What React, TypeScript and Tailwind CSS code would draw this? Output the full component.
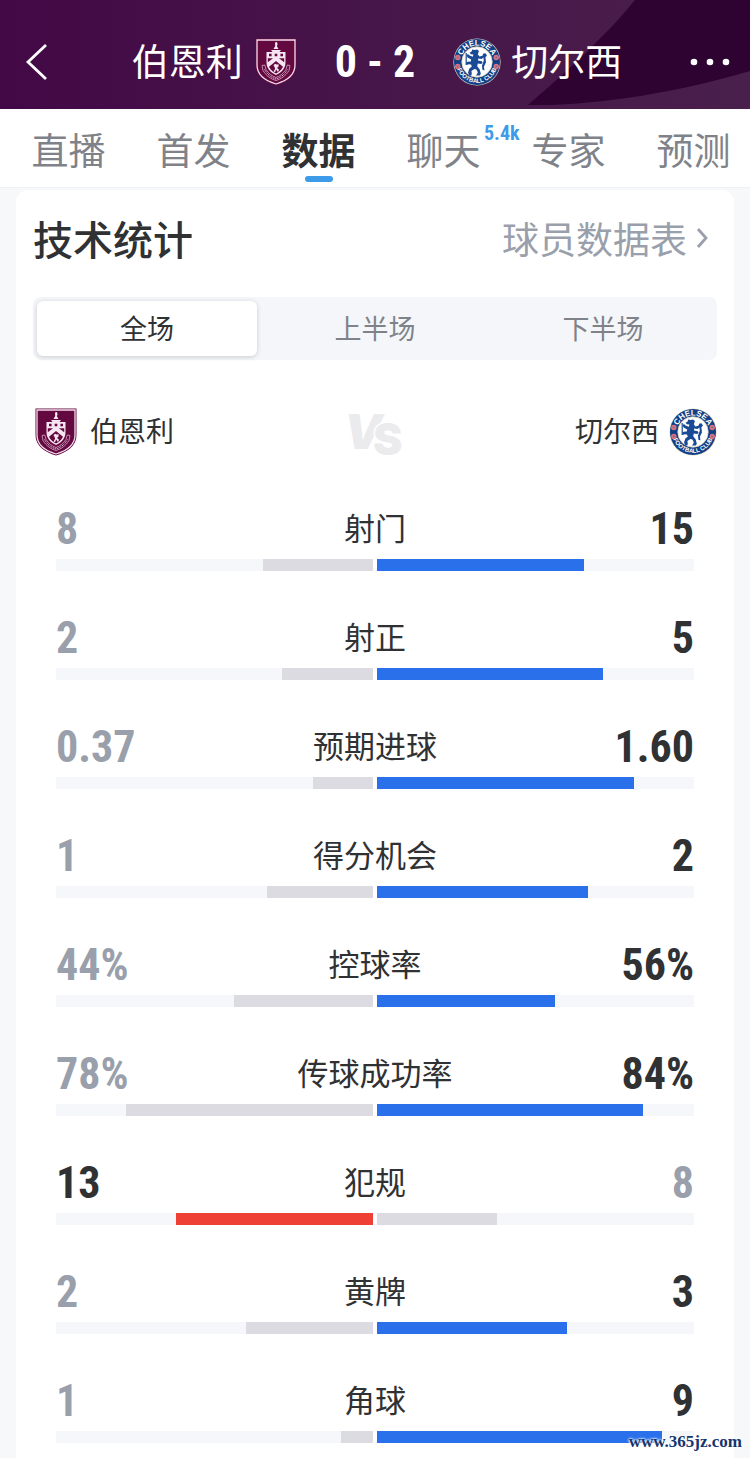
import { useId, useState } from 'react';
import { clsx } from 'clsx';

type Stat = {
  label: string;
  home: string;
  away: string;
  homePct: number;
  awayPct: number;
  lead: 'home' | 'away';
};

const stats: Stat[] = [
  { label: '射门', home: '8', away: '15', homePct: 34.8, awayPct: 65.2, lead: 'away' },
  { label: '射正', home: '2', away: '5', homePct: 28.6, awayPct: 71.4, lead: 'away' },
  { label: '预期进球', home: '0.37', away: '1.60', homePct: 18.8, awayPct: 81.2, lead: 'away' },
  { label: '得分机会', home: '1', away: '2', homePct: 33.3, awayPct: 66.7, lead: 'away' },
  { label: '控球率', home: '44%', away: '56%', homePct: 44, awayPct: 56, lead: 'away' },
  { label: '传球成功率', home: '78%', away: '84%', homePct: 78, awayPct: 84, lead: 'away' },
  { label: '犯规', home: '13', away: '8', homePct: 62, awayPct: 38, lead: 'home' },
  { label: '黄牌', home: '2', away: '3', homePct: 40, awayPct: 60, lead: 'away' },
  { label: '角球', home: '1', away: '9', homePct: 10, awayPct: 90, lead: 'away' },
];

const tabs = [
  { label: '直播' },
  { label: '首发' },
  { label: '数据' },
  { label: '聊天', badge: '5.4k' },
  { label: '专家' },
  { label: '预测' },
];

const periods = ['全场', '上半场', '下半场'];

const numeric = "font-['Roboto_Condensed','Liberation_Sans',sans-serif] font-bold";

function BurnleyCrest({ className }: { className?: string }) {
  return (
    <svg viewBox="0 0 42 48" className={className} aria-hidden="true">
      <path d="M0.5 0.5H41.5V27C41.5 38 32 44.5 21 47.5C10 44.5 0.5 38 0.5 27Z" fill="#63093f" />
      <path d="M2 2H40V27C40 37 31 43 21 46C11 43 2 37 2 27Z" fill="none" stroke="#f3dcec" strokeWidth="1.3" />
      <path d="M20 4.5L22 4L22.6 6.5L21.8 8L23.5 11H18.5L20.2 8Z" fill="#f6e6f1" />
      <path d="M16 12H26L24.5 14H17.5Z" fill="#f6e6f1" />
      <path d="M11.5 14H30.5V24C30.5 31 26 34.5 21 37C16 34.5 11.5 31 11.5 24Z" fill="#f6e6f1" />
      <path d="M14 15.7h2.6v2.6H14zM19.7 15.7h2.6v2.6h-2.6zM25.4 15.7H28v2.6h-2.6z" fill="#63093f" />
      <path d="M12.8 20.2H18L12.8 24.3ZM24 20.2H29.2V24.3Z" fill="#63093f" />
      <path d="M21 23L28 28.8C26.5 32 24 34 21 35.6C18 34 15.5 32 14 28.8Z" fill="#63093f" />
      <path d="M18.5 27l2-1.2 1.5 1 1.5-1v3l-1.5 1 2 2-1 2.2-1.8-2.4-1.2 2.6-1.4-.8 1.6-3z" fill="#f6e6f1" />
      <path d="M7 27.5L9.8 27L11 31.5C14 36 17 38 21 39.5C25 38 28 36 31 31.5L32.2 27L35 27.5L34 32.5C30.5 38 26 41 21 42.5C16 41 11.5 38 8 32.5Z" fill="none" stroke="#d9a9c8" strokeWidth="0.8" />
      <path d="M9.5 31.5C12.5 36.8 16.5 39.5 21 41C25.5 39.5 29.5 36.8 32.5 31.5" fill="none" stroke="#ecd0e2" strokeWidth="1" strokeDasharray="1.2 0.8" />
    </svg>
  );
}

function ChelseaCrest({ className }: { className?: string }) {
  const id = useId();
  return (
    <svg viewBox="0 0 48 48" className={className} aria-hidden="true">
      <defs>
        <path id={`${id}top`} d="M7.6 24A16.4 16.4 0 0 1 40.4 24" />
        <path id={`${id}bottom`} d="M3.2 24A20.8 20.8 0 0 0 44.8 24" />
      </defs>
      <circle cx="24" cy="24" r="23.6" fill="#ddd7c2" />
      <circle cx="24" cy="24" r="23" fill="#123f86" />
      <circle cx="24" cy="24" r="15.2" fill="#fff" stroke="#d9d2b4" strokeWidth="0.8" />
      <text fill="#fff" textAnchor="middle" className="font-['Liberation_Sans',sans-serif] text-[8px] font-bold">
        <textPath href={`#${id}top`} startOffset="50%">CHELSEA</textPath>
      </text>
      <text fill="#fff" textAnchor="middle" className="font-['Liberation_Sans',sans-serif] text-[6px] font-bold">
        <textPath href={`#${id}bottom`} startOffset="50%">FOOTBALL CLUB</textPath>
      </text>
      {[[4.8, 19.5], [4.8, 28.5], [43.2, 19.5], [43.2, 28.5]].map(([cx, cy]) => (
        <g key={`${cx}-${cy}`}>
          <circle cx={cx} cy={cy} r="2.7" fill="#d9737f" />
          <circle cx={cx} cy={cy} r="1" fill="#7d6a9a" />
        </g>
      ))}
      <path
        d="M22 13l2-1.5 2.5.4 2.3-.4.6 2 2 1.2-1.2 1.5-2.6.4.6 2.2 3.2-1.2 1.6-1.6 1.6 1.2-1.2 2.4-3.6 1.8.4 2.2 3.4.2 1.6 1.4-1 1.8-2-.8-2.2.4-.8 2 2.6 2.2 1.2 4-1 1.4 1.6 1.2-4 .2-.4-2 .4-2.6-3-2-2 .4-1.4 2.8 1 2.4 1.2.8-4.4.2-.8-2 1.2-4.4 2.4-3-.6-2.8-3.4.6-1.4-1.2.8-1.6 3.8-.6-.2-2-3.4.4-1.8-1.6-.4 3.4 1.8 4.6-.4 4.4-2 .6.4-3.8-2-4.4.6-5-1.6-1.6 1.6-2.4 2 .2 1 2.4 3 .6 1.6-2.2z"
        fill="#1a4a96"
        transform="translate(48 0) scale(-1 1)"
      />
      <path d="M13.2 15v12" stroke="#1a4a96" strokeWidth="1.2" />
    </svg>
  );
}

function StatRow({ stat }: { stat: Stat }) {
  const homeLeads = stat.lead === 'home';
  return (
    <li>
      <div className="grid h-12 grid-cols-[1fr_auto_1fr] items-center text-[#303133]">
        <span className={clsx(numeric, 'text-[44px] leading-[48px]', !homeLeads && 'text-[#9a9fac]')}>{stat.home}</span>
        <span className="pb-1 text-[31px] leading-[44px]">{stat.label}</span>
        <span className={clsx(numeric, 'text-right text-[44px] leading-[48px]', homeLeads && 'text-[#9a9fac]')}>
          {stat.away}
        </span>
      </div>
      <div className="mt-[6px] grid h-3 grid-cols-2 gap-1">
        <div className="flex justify-end bg-[#f6f7fa]">
          <div className={homeLeads ? 'bg-[#ee4035]' : 'bg-[#dbdbe1]'} style={{ width: `${stat.homePct}%` }} />
        </div>
        <div className="flex bg-[#f6f7fa]">
          <div className={homeLeads ? 'bg-[#dbdbe1]' : 'bg-[#2970ea]'} style={{ width: `${stat.awayPct}%` }} />
        </div>
      </div>
    </li>
  );
}

export default function App() {
  const [tab, setTab] = useState('数据');
  const [period, setPeriod] = useState('全场');

  return (
    <div className="relative min-h-screen overflow-hidden bg-[#f6f8fa] font-['Noto_Sans_CJK_SC',sans-serif]">
      <header className="relative bg-linear-to-r from-[#430846] to-[#491f4c] text-white">
        <svg viewBox="0 0 222 109" className="absolute right-0 top-0 h-full" aria-hidden="true">
          <path d="M107 0C78 36 36 74 0 105C70 106 150 92 222 71V0Z" fill="#2e0231" />
        </svg>
        <div className="relative grid h-[109px] grid-cols-[1fr_auto_1fr] items-center gap-[38px] pt-[14px]">
          <div className="flex items-center justify-between pl-6">
            <button type="button" aria-label="返回" className="cursor-pointer">
              <svg viewBox="0 0 24 38" className="h-[38px] w-6" fill="none" stroke="currentColor" strokeWidth="2.8">
                <path d="M22 2L4 19L22 36" />
              </svg>
            </button>
            <div className="flex items-center gap-3">
              <span className="pb-1 text-[37px] leading-[44px]">伯恩利</span>
              <BurnleyCrest className="h-12 w-[42px]" />
            </div>
          </div>
          <span className={clsx(numeric, 'text-[44px] leading-[48px]')}>0 - 2</span>
          <div className="flex items-center justify-between pr-5">
            <div className="flex items-center gap-[10px]">
              <ChelseaCrest className="size-12" />
              <span className="pb-1 text-[37px] leading-[44px]">切尔西</span>
            </div>
            <button type="button" aria-label="更多" className="cursor-pointer">
              <svg viewBox="0 0 40 8" className="h-2 w-10" fill="currentColor">
                <circle cx="4" cy="4" r="3.3" />
                <circle cx="20" cy="4" r="3.3" />
                <circle cx="36" cy="4" r="3.3" />
              </svg>
            </button>
          </div>
        </div>
      </header>

      <nav className="grid h-[79px] grid-cols-6 border-b border-[#eff1f4] bg-white">
        {tabs.map(({ label, badge }) => (
          <button
            key={label}
            type="button"
            onClick={() => setTab(label)}
            className={clsx(
              'relative flex cursor-pointer flex-col items-center pl-3 pt-4 text-[37px] leading-[48px]',
              tab === label ? 'font-bold text-[#303133]' : 'text-[#7f8389]',
            )}
          >
            {label}
            {tab === label && <span className="mt-[3px] h-[6px] w-7 rounded-full bg-[#3d9be9]" />}
            {badge && (
              <span className={clsx(numeric, 'absolute left-[109px] top-3 text-[20px] leading-6 text-[#3d9be9]')}>
                {badge}
              </span>
            )}
          </button>
        ))}
      </nav>

      <main className="mx-4 mt-[2px] rounded-t-xl bg-white px-[17px] pb-[15px] pt-5">
        <div className="flex h-[60px] items-center justify-between pb-1">
          <h1 className="text-[40px] font-medium leading-[56px] text-[#303133]">技术统计</h1>
          <a href="#players" className="flex items-center gap-2 pr-2 text-[37px] leading-[56px] text-[#9a9fac]">
            球员数据表
            <svg viewBox="0 0 14 22" className="h-[22px] w-[14px]" fill="none" stroke="currentColor" strokeWidth="2.8">
              <path d="M3 2L11 11L3 20" />
            </svg>
          </a>
        </div>

        <div className="mt-[27px] grid h-[63px] grid-cols-3 rounded-lg bg-[#f5f6f9]">
          {periods.map((name) => (
            <button
              key={name}
              type="button"
              onClick={() => setPeriod(name)}
              className={clsx(
                'm-1 cursor-pointer rounded-md text-[27px]',
                period === name ? 'bg-white text-[#303133] shadow-[0_1px_5px_rgba(0,0,0,0.18)]' : 'text-[#7f8389]',
              )}
            >
              {name}
            </button>
          ))}
        </div>

        <div className="mt-12 grid h-12 grid-cols-[1fr_auto_1fr] items-center text-[28px] text-[#303133]">
          <div className="flex items-center gap-[13px] pl-0.5">
            <BurnleyCrest className="h-12 w-[42px]" />
            <span className="pb-1 leading-[44px]">伯恩利</span>
          </div>
          <svg
            viewBox="0 0 56 48"
            className="h-12 w-14 overflow-visible font-['Inter',sans-serif] font-black"
            fill="#ebebed"
            aria-label="VS"
            role="img"
          >
            <text x="-3" y="41" className="text-[48px] italic">
              V
              <tspan x="26" y="47" stroke="#fff" strokeWidth="3" paintOrder="stroke" className="text-[44px] not-italic">
                S
              </tspan>
            </text>
          </svg>
          <div className="flex items-center justify-end gap-[10px]">
            <span className="pb-1 leading-[44px]">切尔西</span>
            <ChelseaCrest className="size-12" />
          </div>
        </div>

        <ul className="mt-[49px] flex flex-col gap-[43px] px-[23px]">
          {stats.map((stat) => (
            <StatRow key={stat.label} stat={stat} />
          ))}
        </ul>
      </main>

      <span className="absolute bottom-1 right-2 font-['Liberation_Serif',serif] text-[17px] font-bold leading-6 text-[#16356f] [text-shadow:0_0_2px_#fff,0_0_2px_#fff,0_0_3px_#fff]">
        www.365jz.com
      </span>
    </div>
  );
}
